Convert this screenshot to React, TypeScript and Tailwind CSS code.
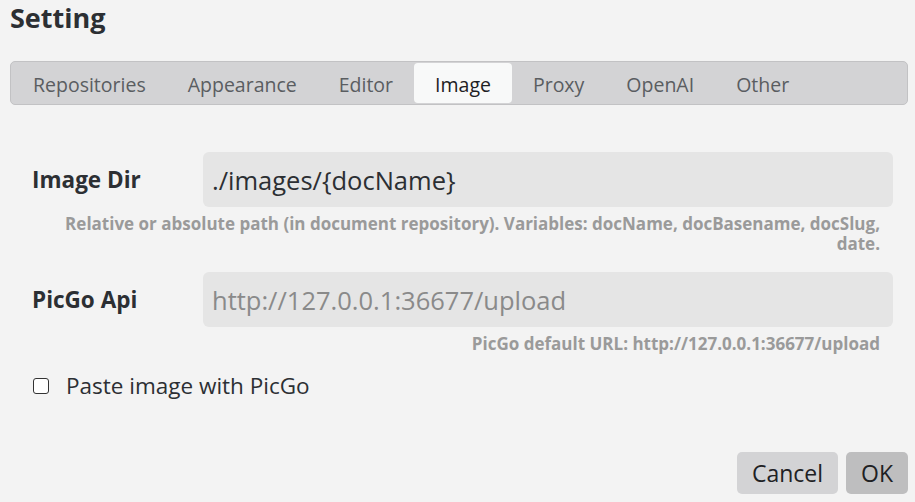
import { useState } from "react";

const tabs = ["Repositories", "Appearance", "Editor", "Image", "Proxy", "OpenAI", "Other"];

export default function App() {
  const [active, setActive] = useState("Image");
  const [pasteWithPicGo, setPasteWithPicGo] = useState(false);

  return (
    <div className="w-full h-[502px] bg-[#f3f3f3] pl-[10px] pr-[7px] flex flex-col font-['Open_Sans',sans-serif] text-[#2c2f33] overflow-hidden">
      <h1 className="text-[27px] leading-[36px] font-bold">Setting</h1>

      <div className="mt-[25px] flex h-[44px] bg-[#d3d3d5] border border-[#c2c2c4] rounded-[5px] p-px">
        {tabs.map((t) => (
          <button
            key={t}
            onClick={() => setActive(t)}
            className={
              t === active
                ? "px-[21px] pt-[3px] text-[19.5px] rounded-[4px] bg-[#f8f9f9] text-[#1e2124]"
                : "px-[21px] pt-[3px] text-[19.5px] rounded-[4px] text-[#5a5d61]"
            }
          >
            {t}
          </button>
        ))}
      </div>

      <div className="pl-[22px] pr-[15px] mt-[47px] flex flex-col">
        <div className="flex items-center">
          <label htmlFor="imageDir" className="w-[171px] text-[22.5px] font-bold">
            Image Dir
          </label>
          <input
            id="imageDir"
            className="flex-1 h-[55px] bg-[#e5e5e5] rounded-[6px] px-[9px] text-[25.5px] text-[#2c2f33] outline-none"
            defaultValue="./images/{docName}"
          />
        </div>
        <p className="pr-[13px] mt-[7px] text-right text-[17px] leading-[20px] font-bold text-[#9a9a9a]">
          Relative or absolute path (in document repository). Variables: docName, docBasename, docSlug, date.
        </p>

        <div className="flex items-center mt-[18px]">
          <label htmlFor="picgoApi" className="w-[171px] text-[22.5px] font-bold">
            PicGo Api
          </label>
          <input
            id="picgoApi"
            className="flex-1 h-[55px] bg-[#e5e5e5] rounded-[6px] px-[9px] text-[25.5px] text-[#2c2f33] placeholder:text-[#8a8a8a] outline-none"
            placeholder="http://127.0.0.1:36677/upload"
          />
        </div>
        <p className="pr-[13px] mt-[7px] text-right text-[17px] leading-[20px] font-bold text-[#9a9a9a]">
          PicGo default URL: http://127.0.0.1:36677/upload
        </p>

        <label className="flex items-center mt-[17px] ml-px cursor-pointer">
          <input
            type="checkbox"
            checked={pasteWithPicGo}
            onChange={(e) => setPasteWithPicGo(e.target.checked)}
            className="appearance-none w-[16px] h-[16px] rounded-[3px] border border-[#333] bg-white checked:bg-[#333]"
          />
          <span className="ml-[17px] text-[22.5px] leading-[30px]">Paste image with PicGo</span>
        </label>
      </div>

      <div className="mt-auto mb-[8px] flex justify-end gap-[8px]">
        <button className="w-[101px] h-[42px] rounded-[5px] bg-[#d3d3d5] text-[23px] text-[#1e2124]">
          Cancel
        </button>
        <button className="w-[62px] h-[42px] rounded-[5px] bg-[#bebebf] text-[23px] text-[#1e2124]">
          OK
        </button>
      </div>
    </div>
  );
}
